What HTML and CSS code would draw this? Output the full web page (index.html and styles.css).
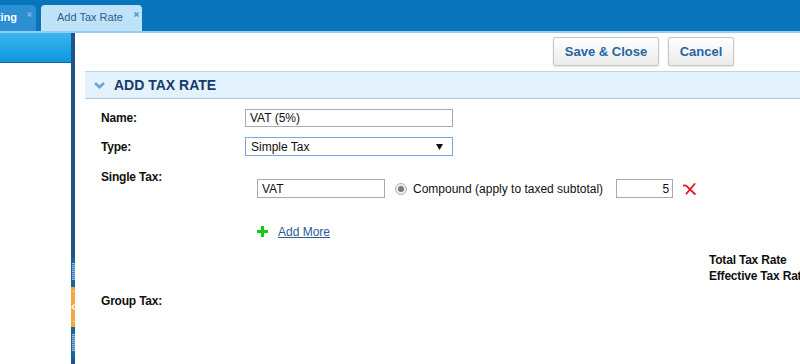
FILE: index.html
```html
<!DOCTYPE html>
<html lang="en">
<head>
<meta charset="utf-8">
<title>Add Tax Rate</title>
<link rel="stylesheet" href="styles.css">
</head>
<body>
<div class="tabbar">
  <div class="tab tab-prev">
    <span class="tab-label">Accounting</span>
    <svg class="tab-x" width="5" height="5" viewBox="0 0 5 5"><path d="M0.5 0.5L4.5 4.5M4.5 0.5L0.5 4.5" stroke="#7fb1dc" stroke-width="1.3"/></svg>
  </div>
  <div class="tab tab-active">
    <span class="tab-label">Add Tax Rate</span>
    <svg class="tab-x" width="5" height="5" viewBox="0 0 5 5"><path d="M0.5 0.5L4.5 4.5M4.5 0.5L0.5 4.5" stroke="#4b8fcf" stroke-width="1.3"/></svg>
  </div>
</div>
<div class="layout">
  <aside class="sidebar">
    <div class="side-head"></div>
  </aside>
  <div class="splitter">
    <div class="sp-track"></div>
    <div class="sp-grip-wrap top"><div class="grip"></div></div>
    <div class="sp-toggle">
      <span class="dot"></span>
      <svg width="4" height="6" viewBox="0 0 4 6"><path d="M3.5 0.5L1 3L3.5 5.5" stroke="#fff" stroke-width="1.4" fill="none"/></svg>
      <span class="dot"></span>
    </div>
    <div class="sp-grip-wrap bottom"><div class="grip"></div></div>
    <div class="sp-end"></div>
  </div>
  <main class="main">
    <div class="toolbar">
      <button class="btn btn-save" type="button">Save &amp; Close</button>
      <button class="btn btn-cancel" type="button">Cancel</button>
    </div>
    <section class="panel">
      <div class="panel-head">
        <svg class="chevron" width="11" height="7" viewBox="0 0 11 7"><path d="M1 1L5.5 5.2L10 1" stroke="#6aa5d4" stroke-width="2.6" fill="none"/></svg>
        <span class="panel-title">ADD TAX RATE</span>
      </div>
      <div class="form">
        <div class="row row-name">
          <label class="label">Name:</label>
          <input class="field field-name" type="text" value="VAT (5%)">
        </div>
        <div class="row row-type">
          <label class="label">Type:</label>
          <div class="select-wrap">
            <select class="field field-select">
              <option>Simple Tax</option>
              <option>Group Tax</option>
            </select>
            <svg class="select-arrow" width="7" height="6" viewBox="0 0 7 6"><path d="M0 0H7L3.5 6Z" fill="#111"/></svg>
          </div>
        </div>
        <div class="row row-single">
          <label class="label label-single">Single Tax:</label>
          <div class="tax-lines">
            <div class="tax-line">
              <input class="field field-taxname" type="text" value="VAT">
              <span class="radio"><span class="radio-dot"></span></span>
              <span class="radio-text">Compound (apply to taxed subtotal)</span>
              <input class="field field-rate" type="text" value="5">
              <svg class="del" width="13" height="12" viewBox="0 0 13 12">
                <path d="M0.5 2.6C2 2.2 3 2.4 4.2 3.6L11.8 11" stroke="#e8141e" stroke-width="1.8" fill="none" stroke-linecap="round"/>
                <path d="M11.6 1L3.4 10.6" stroke="#e8141e" stroke-width="1.8" fill="none" stroke-linecap="round"/>
              </svg>
            </div>
          </div>
        </div>
        <div class="row row-add">
          <svg class="plus" width="11" height="11" viewBox="0 0 11 11"><path d="M4 0H7V4H11V7H7V11H4V7H0V4H4Z" fill="#14c814"/></svg>
          <a class="add-more" href="#">Add More</a>
        </div>
        <div class="totals">
          <div class="total-line">Total Tax Rate</div>
          <div class="total-line">Effective Tax Rate</div>
        </div>
        <div class="row row-group">
          <label class="label">Group Tax:</label>
        </div>
      </div>
    </section>
  </main>
</div>
</body>
</html>
```
FILE: styles.css
```css
* { box-sizing: border-box; }
html, body { margin: 0; padding: 0; }
body {
  width: 800px;
  height: 364px;
  overflow: hidden;
  background: #fff;
  font-family: "Liberation Sans", Arial, sans-serif;
  font-size: 12px;
  color: #111;
}

/* ---------- tab bar ---------- */
.tabbar {
  height: 33px;
  background: #0874bc;
  border-bottom: 2px solid #94cdf3;
  display: flex;
  align-items: flex-end;
  gap: 5px;
}
.tab {
  height: 26px;
  display: flex;
  align-items: center;
  border-radius: 0 4px 0 0;
  font-size: 11px;
  white-space: nowrap;
}
.tab-label { flex-shrink: 0; padding-bottom: 2px; }
.tab-x { flex-shrink: 0; align-self: flex-start; margin-top: 7px; }
.tab-prev {
  width: 36px;
  overflow: hidden;
  justify-content: flex-end;
  background: #2c8fd3;
  color: #fff;
  font-weight: bold;
  padding-right: 4px;
}
.tab-prev .tab-x { margin-left: 10px; }
.tab-active {
  width: 101px;
  background: #bee3f9;
  color: #2d5b8b;
  border-radius: 4px 4px 0 0;
  padding-left: 16px;
}
.tab-active .tab-x { margin-left: 11px; }

/* ---------- layout ---------- */
.layout {
  display: flex;
  height: 331px;
}
.sidebar {
  width: 71px;
  flex-shrink: 0;
  background: #fff;
}
.side-head {
  height: 30px;
  background: linear-gradient(#3bb5ef, #0c98de);
  border-bottom: 1px solid #1b679a;
}

/* ---------- splitter ---------- */
.splitter {
  width: 4px;
  flex-shrink: 0;
  display: flex;
  flex-direction: column;
}
.sp-track { flex: 1; background: #1f5489; }
.sp-grip-wrap {
  background: #17659f;
  display: flex;
  justify-content: center;
}
.sp-grip-wrap.top { height: 29px; padding-top: 5px; }
.sp-grip-wrap.bottom { height: 31px; padding-top: 7px; }
.grip {
  width: 3px;
  height: 17px;
  background: repeating-linear-gradient(#9dbde0 0 1px, #3c7bb3 1px 2px);
}
.sp-toggle {
  height: 40px;
  background: #f7a83a;
  display: flex;
  flex-direction: column;
  align-items: center;
  justify-content: space-between;
  padding: 4px 0 5px;
}
.dot { width: 1px; height: 1px; background: #fff; }
.sp-end { height: 6px; background: #1f5489; }

/* ---------- main ---------- */
.main {
  flex: 1;
  min-width: 0;
  padding-left: 10px;
}
.toolbar {
  height: 38px;
  display: flex;
  justify-content: flex-end;
  align-items: flex-start;
  gap: 9px;
  padding: 4px 66px 0 0;
}
.btn {
  height: 29px;
  border: 1px solid #c6c6c6;
  border-radius: 2px;
  background: linear-gradient(#ffffff, #ebebeb);
  box-shadow: 0 1px 2px rgba(0,0,0,0.12);
  color: #2565a0;
  font-family: "Liberation Sans", Arial, sans-serif;
  font-size: 13px;
  font-weight: bold;
  padding: 0;
}
.btn-save { width: 106px; }
.btn-cancel { width: 66px; }

/* ---------- panel ---------- */
.panel-head {
  height: 28px;
  background: #e3f2fd;
  border-top: 1px solid #b9d6eb;
  border-bottom: 1px solid #aac9df;
  display: flex;
  align-items: center;
  padding-left: 9px;
}
.chevron { margin-right: 9px; margin-top: 1px; }
.panel-title {
  font-size: 14px;
  font-weight: bold;
  color: #163b6b;
}

.form { display: flex; flex-direction: column; }
.row { display: flex; align-items: center; padding-left: 16px; }
.label {
  width: 144px;
  flex-shrink: 0;
  font-weight: bold;
  font-size: 12px;
  letter-spacing: -0.2px;
  color: #111;
}
.row-name { margin-top: 10px; height: 18px; }
.row-type { margin-top: 10px; height: 19px; }

.field {
  font-family: "Liberation Sans", Arial, sans-serif;
  font-size: 12px;
  color: #111;
  border: 1px solid #a9a9a9;
  background: #fff;
  margin: 0;
  outline: none;
}
.field-name { width: 208px; height: 18px; padding: 0 4px; }
.select-wrap { position: relative; width: 208px; height: 19px; }
.field-select {
  -webkit-appearance: none;
  appearance: none;
  width: 208px;
  height: 19px;
  padding: 0 0 0 5px;
  border-color: #7aa7dc;
  border-radius: 0;
}
.select-arrow { position: absolute; right: 10px; top: 7px; pointer-events: none; }

.row-single {
  align-items: flex-start;
  margin-top: 12px;
}
.label-single { width: 156px; line-height: 16px; margin-top: 1px; }
.tax-lines { padding-top: 11px; }
.tax-line { display: flex; align-items: center; height: 19px; }
.field-taxname { width: 128px; height: 19px; padding: 0 4px; }
.radio {
  width: 12px;
  height: 12px;
  margin-left: 10px;
  border-radius: 50%;
  border: 1px solid #b4b4b4;
  background: #ececec;
  display: flex;
  align-items: center;
  justify-content: center;
}
.radio-dot { width: 6px; height: 6px; border-radius: 50%; background: #7a7a7a; }
.radio-text { margin-left: 6px; white-space: nowrap; }
.field-rate { width: 57px; height: 19px; margin-left: 13px; padding: 0 3px; text-align: right; }
.del { margin-left: 10px; margin-top: 1px; }

.row-add {
  margin-top: 26px;
  padding-left: 172px;
  height: 16px;
}
.plus { margin-right: 10px; margin-top: -1px; }
.add-more {
  color: #2b5c93;
  text-decoration: underline;
  font-size: 12px;
  line-height: 16px;
}

.totals {
  margin-top: 12px;
  margin-left: 624px;
  white-space: nowrap;
}
.total-line {
  font-weight: bold;
  line-height: 16px;
  letter-spacing: -0.2px;
  color: #111;
}
.row-group { margin-top: 9px; height: 16px; }
```
